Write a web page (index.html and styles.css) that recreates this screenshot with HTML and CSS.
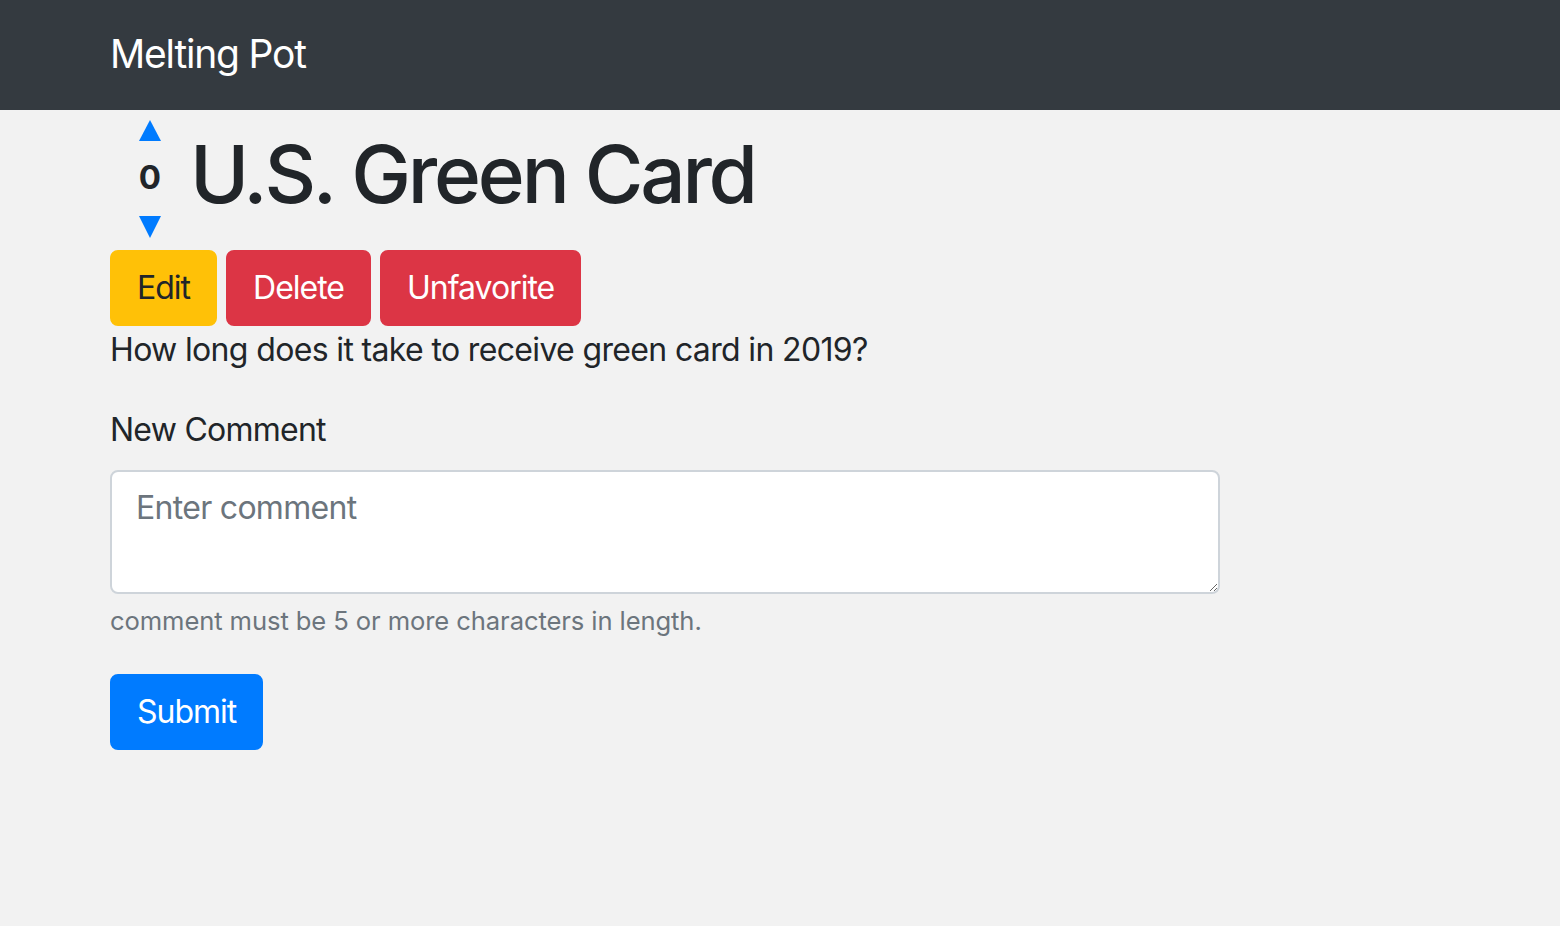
FILE: index.html
```html
<!DOCTYPE html>
<html lang="en">
<head>
<meta charset="utf-8">
<title>Melting Pot</title>
<link rel="stylesheet" href="styles.css">
</head>
<body>
<nav class="navbar">
  <a class="brand" href="#">Melting Pot</a>
</nav>
<main class="container">
  <div class="post-head">
    <div class="vote">
      <svg class="arrow" width="22" height="21" viewBox="0 0 22 21"><polygon points="11,0 22,21 0,21" fill="#007bff"/></svg>
      <span class="count">0</span>
      <svg class="arrow" width="22" height="22" viewBox="0 0 22 22"><polygon points="0,0 22,0 11,22" fill="#007bff"/></svg>
    </div>
    <h1 class="title">U.S. Green Card</h1>
  </div>
  <div class="actions">
    <button class="btn btn-warning">Edit</button>
    <button class="btn btn-danger">Delete</button>
    <button class="btn btn-danger">Unfavorite</button>
  </div>
  <p class="question">How long does it take to receive green card in 2019?</p>
  <form class="comment-form">
    <label class="label" for="comment">New Comment</label>
    <textarea id="comment" class="control" placeholder="Enter comment"></textarea>
    <small class="help">comment must be 5 or more characters in length.</small>
    <button type="button" class="btn btn-primary submit">Submit</button>
  </form>
</main>
</body>
</html>
```
FILE: styles.css
```css
* { box-sizing: border-box; }
html, body { margin: 0; padding: 0; }
body {
  background: #f2f2f2;
  color: #212529;
  font-family: Inter, "Noto Sans", "Liberation Sans", sans-serif;
  font-size: 32px;
  line-height: 1.5;
}
.navbar {
  height: 110px;
  background: #343a40;
  display: flex;
  align-items: center;
  padding: 0 110px;
}
.brand {
  color: #fff;
  text-decoration: none;
  font-size: 39px;
  line-height: 1.5;
  letter-spacing: -1.2px;
  margin-top: -2px;
}
.container {
  padding: 0 110px;
  width: 1330px;
}
.post-head {
  display: flex;
  align-items: flex-start;
  height: 140px;
}
.vote {
  width: 80px;
  display: flex;
  flex-direction: column;
  align-items: center;
  margin-top: 10px;
}
.arrow { display: block; }
.count {
  font-weight: 700;
  font-size: 33px;
  line-height: 1;
  margin: 20px 0 22px;
}
.title {
  margin: 16px 0 0;
  font-size: 80px;
  font-weight: 500;
  line-height: 1.2;
  letter-spacing: -3.2px;
}
.actions {
  display: flex;
  gap: 9px;
}
.btn {
  font-family: inherit;
  font-size: 32px;
  line-height: 48px;
  padding: 12px 25px;
  border: 2px solid transparent;
  border-radius: 8px;
  height: 76px;
  letter-spacing: -1px;
}
.btn-warning { background: #ffc107; color: #212529; border-color: #ffc107; }
.btn-danger { background: #dc3545; color: #fff; border-color: #dc3545; }
.btn-primary { background: #007bff; color: #fff; border-color: #007bff; }
.question {
  margin: 0 0 32px;
  letter-spacing: -0.65px;
}
.comment-form {
  display: flex;
  flex-direction: column;
  align-items: flex-start;
}
.label {
  margin-bottom: 16px;
  letter-spacing: -0.75px;
}
.control {
  width: 1110px;
  height: 124px;
  border: 2px solid #ced4da;
  border-radius: 8px;
  background: #fff;
  padding: 12px 24px;
  font-family: inherit;
  font-size: 32px;
  line-height: 48px;
  color: #495057;
  letter-spacing: -0.7px;
}
.control::placeholder { color: #6c757d; }
.help {
  margin-top: 8px;
  font-size: 25.6px;
  line-height: 1.5;
  color: #6c757d;
  letter-spacing: -0.1px;
}
.submit {
  margin-top: 34px;
}
```
